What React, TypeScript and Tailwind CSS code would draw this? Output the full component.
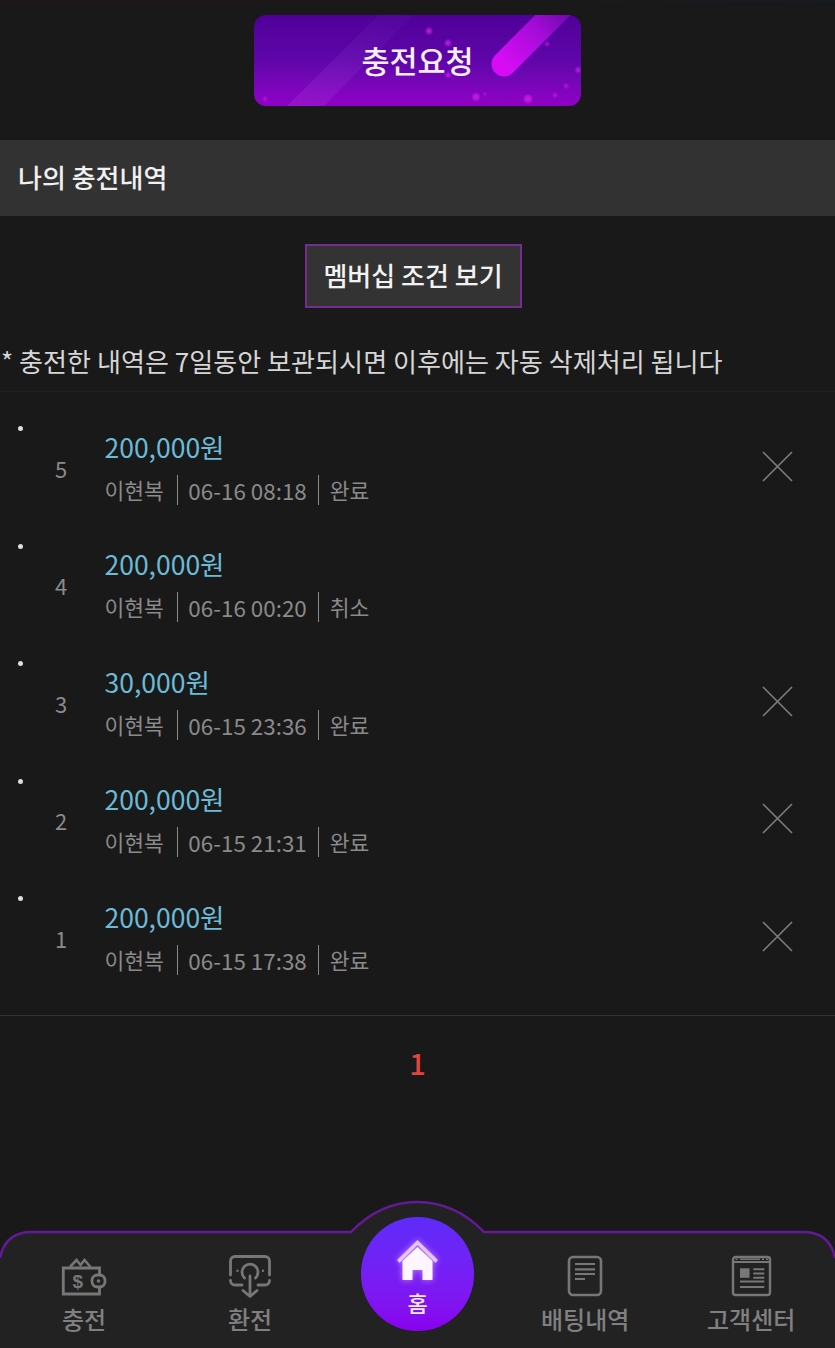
import React from "react";

const rows = [
  { n: 5, amount: "200,000원", date: "06-16 08:18", status: "완료", x: true },
  { n: 4, amount: "200,000원", date: "06-16 00:20", status: "취소", x: false },
  { n: 3, amount: "30,000원", date: "06-15 23:36", status: "완료", x: true },
  { n: 2, amount: "200,000원", date: "06-15 21:31", status: "완료", x: true },
  { n: 1, amount: "200,000원", date: "06-15 17:38", status: "완료", x: true },
];

const sparkles = [
  [175, 16, 3], [194, 28, 3], [194, 60, 2.5], [222, 82, 3.5], [231, 79, 1.5], [274, 84, 4], [324, 55, 2.5],
  [312, 71, 2], [301, 80, 2], [293, 29, 2], [11, 84, 2],
];

function Wallet() {
  return (
    <svg width="46" height="40" viewBox="0 0 46 40" fill="none" stroke="#777" strokeWidth="2.800">
      <path d="M38.500 31V38H2.300V12H38.500V19" />
      <path d="M9 11l6.500-7 4 5 4-5 6 7" strokeWidth="2.600" />
      <rect x="31" y="19" width="13" height="12" rx="5.500" />
      <circle cx="37.500" cy="25" r="1.800" fill="#777" stroke="none" />
      <text x="11.500" y="32" fontSize="19" fontWeight="700" fill="#777" stroke="none" fontFamily="'Liberation Sans', sans-serif">$</text>
    </svg>
  );
}
function Exchange() {
  return (
    <svg width="44" height="44" viewBox="0 0 44 44" fill="none" stroke="#777" strokeWidth="2.800" strokeLinecap="round" strokeLinejoin="round">
      <path d="M2.500 21V7a4.500 4.500 0 0 1 4.500-4.500h30a4.500 4.500 0 0 1 4.500 4.500v14" />
      <path d="M14 31H7a4.500 4.500 0 0 1-4.500-4.500M30 31h7a4.500 4.500 0 0 0 4.500-4.500" />
      <path d="M16.500 24a8 8 0 1 1 11 0" />
      <path d="M22 22v19M15 36.500l7 6 7-6" />
      <circle cx="9.500" cy="16.700" r="1.200" fill="#777" stroke="none" />
      <circle cx="35" cy="16.700" r="1.200" fill="#777" stroke="none" />
    </svg>
  );
}
function Doc() {
  return (
    <svg width="36" height="42" viewBox="0 0 36 42" fill="none" stroke="#777" strokeWidth="2.600">
      <rect x="2" y="2" width="32" height="38" rx="4" />
      <path d="M8 9h20M8 14.300h20M8 19h20M8 24h10" strokeWidth="2.200" />
    </svg>
  );
}
function News() {
  return (
    <svg width="42" height="42" viewBox="0 0 42 42" fill="none" stroke="#777" strokeWidth="2.400">
      <rect x="3" y="2" width="37" height="38" rx="2.500" />
      <path d="M3 7h37" strokeWidth="2" />
      <path d="M10 4.200h20" strokeWidth="1.500" />
      <path d="M5.500 4.200h2M32 4.200h2M36 4.200h2" strokeWidth="1.500" />
      <rect x="10" y="13.300" width="9.500" height="9.500" fill="#777" stroke="none" />
      <path d="M23.300 14.300h11M23.300 18.500h11M23.300 22.700h11M10 26.500h24.300M10 32h24.300" strokeWidth="2" />
    </svg>
  );
}

function NavItem({ label, icon, className }: { label: string; icon: React.ReactNode; className: string }) {
  return (
    <div className={`flex flex-col items-center absolute top-[53px] ${className}`}>
      <div className="h-[46px] flex items-center justify-center">{icon}</div>
      <span className="text-[24px] leading-[32px] font-medium text-[#808080] mt-[4px] whitespace-nowrap">{label}</span>
    </div>
  );
}

export default function App() {
  return (
    <div
      className="relative w-[835px] h-[1348px] overflow-hidden bg-[#191919] text-white"
      style={{ fontFamily: "'Noto Sans CJK KR', 'Noto Sans', sans-serif" }}
    >
      <div className="h-[2px] bg-gradient-to-r from-[#1d1719] via-[#1d1719] to-[#171c22]" />
      <div className="h-[13px]" />
      <div className="flex justify-center">
        <div className="relative w-[327px] h-[91px] rounded-[12px] overflow-hidden bg-gradient-to-b from-[#4f0098] via-[#5f06aa] to-[#9000c6] flex items-center justify-center">
          <svg className="absolute inset-0" width="327" height="91" viewBox="0 0 327 91">
            <defs>
              <linearGradient id="pill" x1="0" y1="1" x2="1" y2="0">
                <stop offset="0" stopColor="#d70cf5" />
                <stop offset="0.6" stopColor="#a50cd8" />
                <stop offset="1" stopColor="#7508b4" />
              </linearGradient>
              <linearGradient id="band" x1="0" y1="1" x2="1" y2="0">
                <stop offset="0" stopColor="#b040e0" stopOpacity="0.28" />
                <stop offset="1" stopColor="#7a40c8" stopOpacity="0.06" />
              </linearGradient>
              <filter id="soft" x="-100%" y="-100%" width="300%" height="300%">
                <feGaussianBlur stdDeviation="1.200" />
              </filter>
            </defs>
            <path d="M33 91 L125 0 H160 L70 91Z" fill="url(#band)" />
            <path d="M250 49 L305 -6" stroke="url(#pill)" strokeWidth="25" strokeLinecap="round" fill="none" />
            {sparkles.map(([x, y, r], i) => (
              <circle key={i} cx={x} cy={y} r={r} fill="#cc22e8" opacity="0.8" filter="url(#soft)" />
            ))}
          </svg>
          <span className="relative text-[30.500px] font-medium text-[#f6eefc]">충전요청</span>
        </div>
      </div>

      <div className="mt-[34px] h-[76px] bg-[#323232] flex items-center px-[18px] text-[26px] font-medium text-[#f0f0f0]">
        <span className="-mt-[3px]">나의 충전내역</span>
      </div>

      <div className="mt-[28px] flex justify-center pr-[9px]">
        <div className="w-[217px] h-[64px] bg-[#333333] border-2 border-[#752c93] flex items-center justify-center text-[26px] font-medium text-[#f2f2f2]">
          <span className="-mt-[3px]">멤버십 조건 보기</span>
        </div>
      </div>

      <div className="mt-[33px] h-[40px] leading-[40px] pl-[1px] text-[26.100px] text-[#d6d6d6] whitespace-nowrap">
        * 충전한 내역은 7일동안 보관되시면 이후에는 자동 삭제처리 됩니다
      </div>
      <div className="mt-[10px] h-px bg-[#1a2229]" />

      <ul className="mt-[15px]">
        {rows.map((r) => (
          <li key={r.n} className="relative h-[117.500px] flex items-center">
            <span className="absolute left-[18px] top-[19px] w-[5px] h-[5px] rounded-full bg-[#dedede] blur-[0.5px]" />
            <span className="w-[122px] text-center text-[22px] text-[#8a8a8a] mt-[5px]">{r.n}</span>
            <div className="-ml-[17.500px] flex-1">
              <div className="text-[26.500px] leading-[36px] text-[#6bbbd6] mt-[2px]">{r.amount}</div>
              <div className="mt-[10px] flex items-center text-[21.500px] leading-[30px] text-[#8a8a8a]">
                <span>이현복</span>
                <span className="ml-[13px] mr-[10.500px] w-px h-[30px] bg-[#8a8a8a]" />
                <span className="text-[22.400px]">{r.date}</span>
                <span className="ml-[11px] mr-[11px] w-px h-[30px] bg-[#8a8a8a]" />
                <span>{r.status}</span>
              </div>
            </div>
            {r.x && (
              <svg className="mr-[42px] mt-[1px]" width="31" height="31" viewBox="0 0 31 31" stroke="#7d7d7d" strokeWidth="1.600">
                <path d="M1 1l29 29M30 1L1 30" />
              </svg>
            )}
          </li>
        ))}
      </ul>

      <div className="mt-[20px] h-px bg-[#333333]" />
      <div className="mt-[26px] text-center text-[29px] leading-[40px] font-medium text-[#e2453c]">1</div>

      <div className="absolute left-0 bottom-0 w-[835px] h-[148px]">
        <svg className="absolute inset-0" width="835" height="148" viewBox="0 0 835 148">
          <path
            d="M0 58 Q5 33 30 32 H351 Q380 2 417 2 Q455 2 484 32 H805 Q830 33 835 58 V148 H0Z"
            fill="#222222"
          />
          <path
            d="M0 58 Q5 33 30 32 H351 Q380 2 417 2 Q455 2 484 32 H805 Q830 33 835 58"
            fill="none"
            stroke="#641a96"
            strokeWidth="2.500"
          />
        </svg>
        <div className="absolute left-[361px] top-[17px] w-[113px] h-[114px] rounded-full bg-gradient-to-b from-[#5e2bfa] to-[#8a00ee] flex flex-col items-center">
          <svg className="mt-[22px] drop-shadow-[0_0_3px_rgba(255,200,255,0.6)]" width="44" height="42" viewBox="0 0 44 42">
            <path d="M21.500 1L42 21l-2.500 3-18-18-18 18L1 21z" fill="#e3c4ff" />
            <path d="M21.500 8L36.500 22V41H26.500V31H16.500V41H6.500V22z" fill="#fdf5ff" />
          </svg>
          <span className="text-[22px] leading-[26px] font-medium text-[#f5e9ff] mt-[8px]">홈</span>
        </div>
        <NavItem label="충전" icon={<Wallet />} className="left-[61px]" />
        <NavItem label="환전" icon={<Exchange />} className="left-[228px]" />
        <NavItem label="배팅내역" icon={<Doc />} className="left-[541px]" />
        <NavItem label="고객센터" icon={<News />} className="left-[707px]" />
      </div>
    </div>
  );
}
